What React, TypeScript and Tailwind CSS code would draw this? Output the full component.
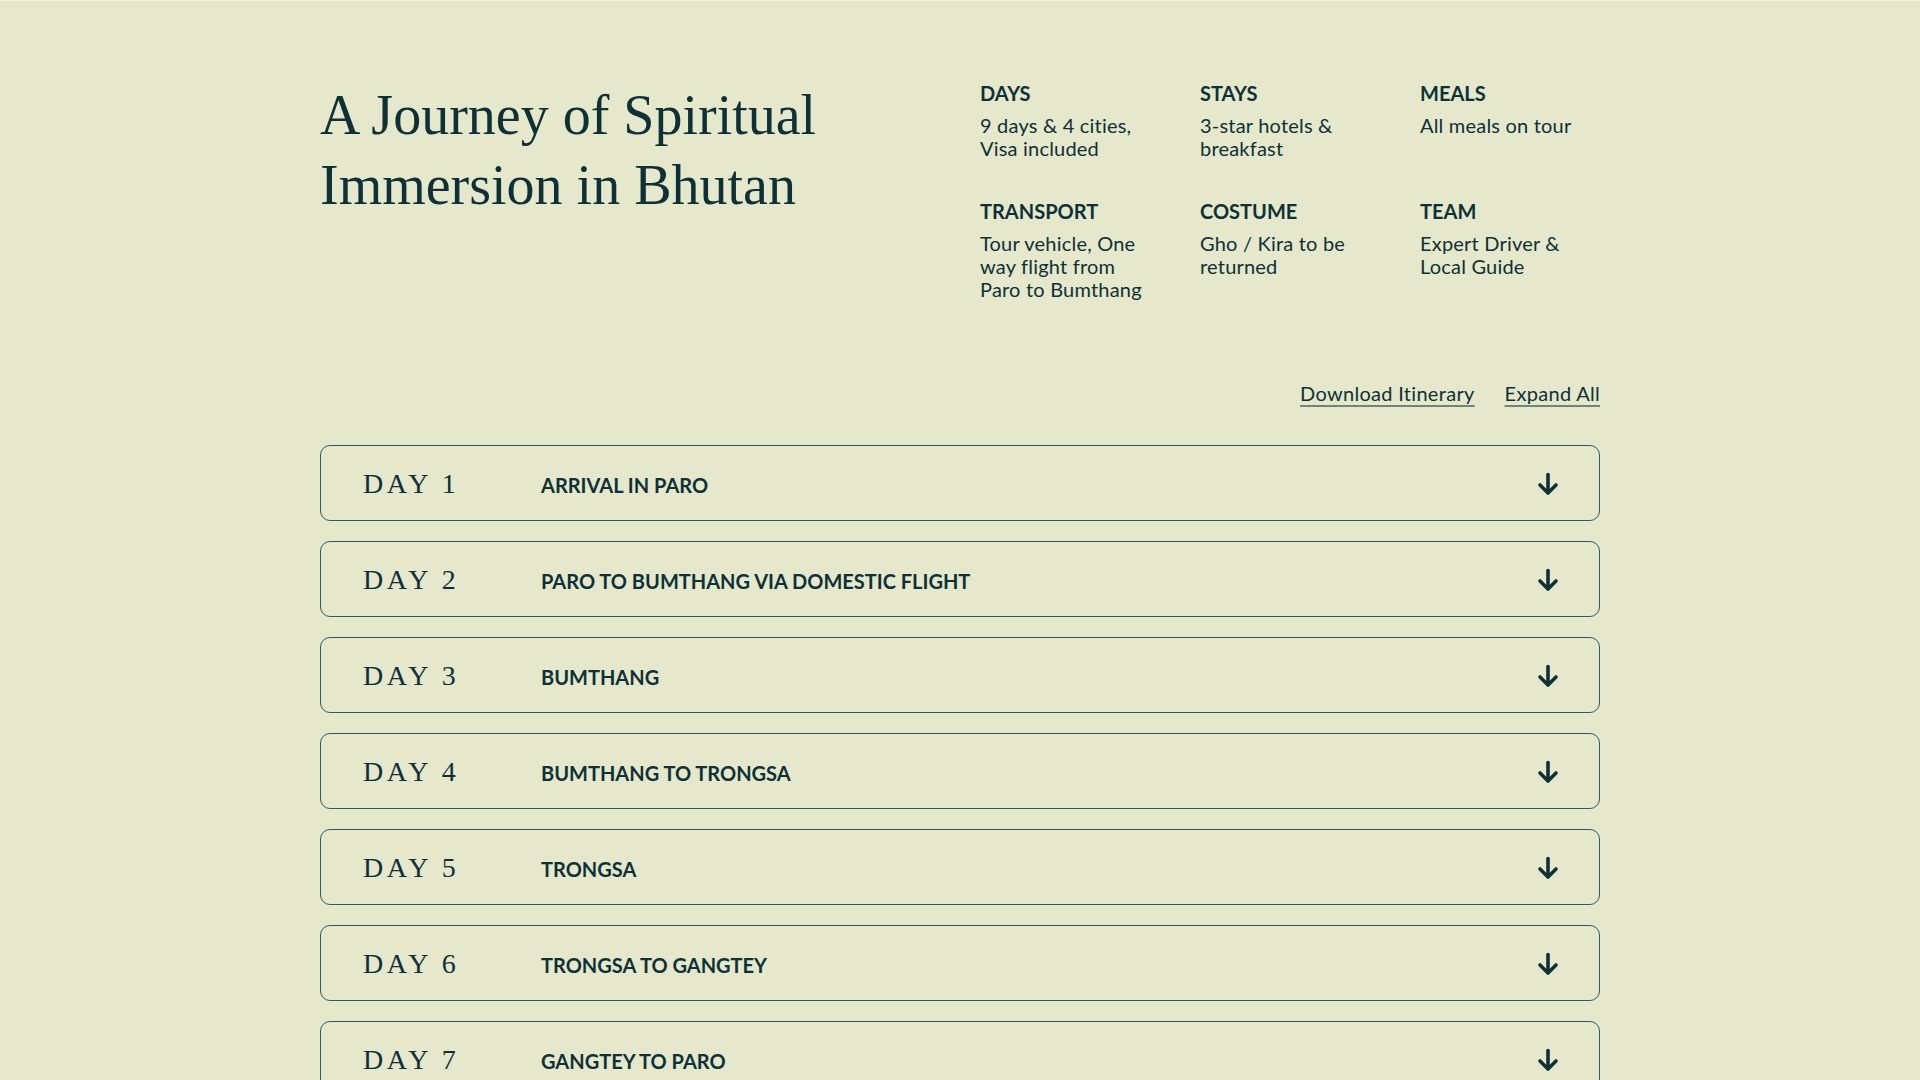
import { useState } from 'react';

type Stat = {
  label: string;
  value: string;
};

const stats: Stat[] = [
  { label: 'DAYS', value: '9 days & 4 cities, Visa included' },
  { label: 'STAYS', value: '3-star hotels & breakfast' },
  { label: 'MEALS', value: 'All meals on tour' },
  { label: 'TRANSPORT', value: 'Tour vehicle, One way flight from Paro to Bumthang' },
  { label: 'COSTUME', value: 'Gho / Kira to be returned' },
  { label: 'TEAM', value: 'Expert Driver & Local Guide' },
];

const days = [
  'ARRIVAL IN PARO',
  'PARO TO BUMTHANG VIA DOMESTIC FLIGHT',
  'BUMTHANG',
  'BUMTHANG TO TRONGSA',
  'TRONGSA',
  'TRONGSA TO GANGTEY',
  'GANGTEY TO PARO',
  'PARO',
  'DEPARTURE FROM PARO',
];

function ArrowDown() {
  return (
    <svg width="24" height="24" viewBox="0 0 24 24" fill="none" stroke="#0e3138" strokeWidth="3.6" strokeLinecap="round" strokeLinejoin="round">
      <path d="M12 2.5V20.5" />
      <path d="M4 13l8 8 8-8" />
    </svg>
  );
}

export default function App() {
  const [open, setOpen] = useState<number[]>([]);

  const toggle = (i: number) =>
    setOpen(prev => (prev.includes(i) ? prev.filter(x => x !== i) : [...prev, i]));

  return (
    <div className="min-h-screen bg-[#e5e8cb] text-[#0e3138] font-['Lato',sans-serif]">
      <div className="h-px bg-[#f1f2e2]" />
      <div className="w-[1280px] mx-auto pt-[79px] pb-20">
        {/* Header */}
        <div className="grid grid-cols-2 gap-10">
          <h1 className="font-['Liberation_Serif',serif] text-[56px] leading-[70px] font-normal">
            A Journey of Spiritual
            <br />
            Immersion in Bhutan
          </h1>
          <div className="grid grid-cols-[180px_180px_180px] gap-x-10 gap-y-10 pt-[2px]">
            {stats.map(s => (
              <div key={s.label}>
                <p className="text-[20px] leading-[23px] font-bold">{s.label}</p>
                <p className="mt-[9px] max-w-[165px] text-[20px] leading-[23px] tracking-[0.01em]">{s.value}</p>
              </div>
            ))}
          </div>
        </div>

        {/* Links */}
        <div className="mt-[81px] flex justify-end gap-[30px] text-[20px] leading-[23px] tracking-[0.015em]">
          <a href="#" className="underline underline-offset-[4px] decoration-[1.5px] decoration-[#0e3138]/55">
            Download Itinerary
          </a>
          <button
            onClick={() => setOpen(open.length === days.length ? [] : days.map((_, i) => i))}
            className="underline underline-offset-[4px] decoration-[1.5px] decoration-[#0e3138]/55"
          >
            {open.length === days.length ? 'Collapse All' : 'Expand All'}
          </button>
        </div>

        {/* Itinerary */}
        <div className="mt-10 flex flex-col gap-5">
          {days.map((title, i) => (
            <div key={title} className="border border-[#2c5870] rounded-[10px]">
              <button
                onClick={() => toggle(i)}
                className="w-full h-[74px] flex items-center pl-[42px] pr-[39px] pt-[2px] text-left"
              >
                <div className="flex items-baseline">
                  <span className="w-[178px] font-['Liberation_Serif',serif] text-[28px] leading-[28px] tracking-[0.13em]">
                    DAY {i + 1}
                  </span>
                  <span className="text-[20px] leading-[20px] font-bold">{title}</span>
                </div>
                <span className={`ml-auto ${open.includes(i) ? 'rotate-180' : ''}`}>
                  <ArrowDown />
                </span>
              </button>
              {open.includes(i) && (
                <div className="px-[42px] pb-6 text-[18px] leading-[26px]">
                  Details for day {i + 1} will be shared in the downloadable itinerary.
                </div>
              )}
            </div>
          ))}
        </div>
      </div>
    </div>
  );
}
